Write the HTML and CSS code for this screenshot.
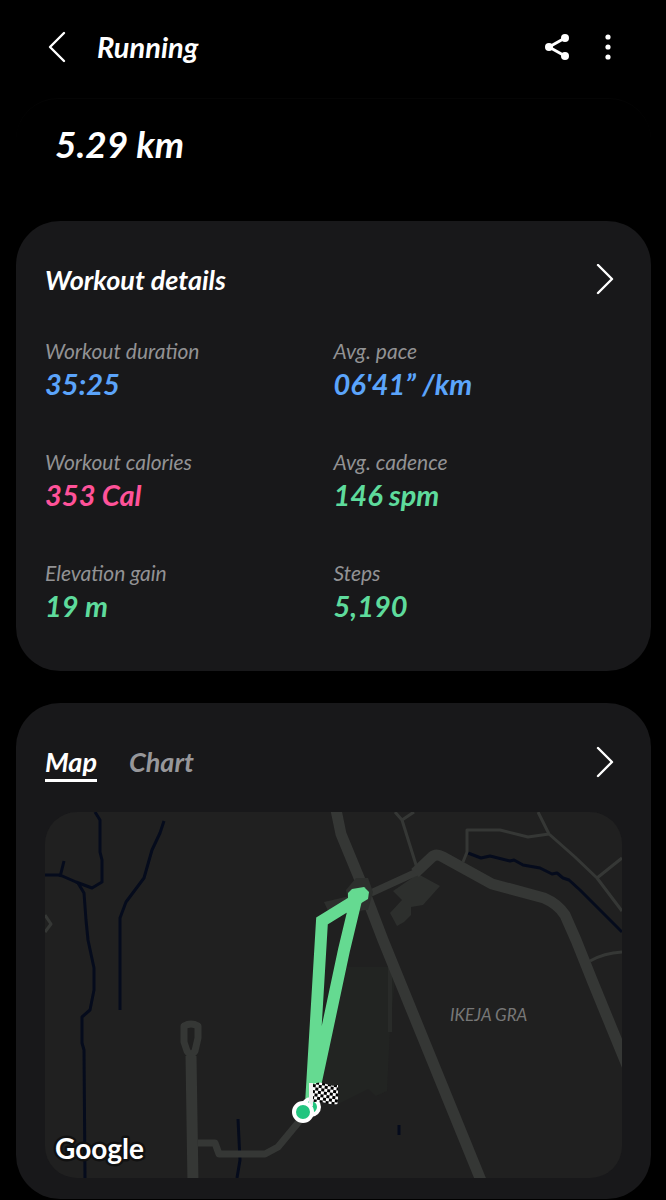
FILE: index.html
```html
<!DOCTYPE html>
<html lang="en">
<head>
<meta charset="utf-8">
<meta name="viewport" content="width=device-width, initial-scale=1">
<title>Running</title>
<link rel="stylesheet" href="styles.css">
</head>
<body>
<header class="topbar">
  <button class="icon-btn" type="button" aria-label="Back">
    <svg class="icon" viewBox="0 0 32 32"><path class="chevron" d="M22 2 8 16 22 30"/></svg>
  </button>
  <h1 class="topbar-title">Running</h1>
  <button class="icon-btn" type="button" aria-label="Share">
    <svg class="icon" viewBox="0 0 32 32"><path class="share-line" d="M24 7 8 16 24 25"/><circle cx="24" cy="7" r="4"/><circle cx="8" cy="16" r="4"/><circle cx="24" cy="25" r="4"/></svg>
  </button>
  <button class="icon-btn" type="button" aria-label="More options">
    <svg class="icon" viewBox="0 0 32 32"><circle cx="16" cy="6" r="2.6"/><circle cx="16" cy="16" r="2.6"/><circle cx="16" cy="26" r="2.6"/></svg>
  </button>
</header>
<main class="content">
  <section class="summary"><p class="distance">5.29 km</p></section>

  <section class="card">
    <div class="card-head">
      <h2 class="card-title">Workout details</h2>
      <button class="icon-btn" type="button" aria-label="Open workout details">
        <svg class="icon" viewBox="0 0 32 32"><path class="chevron" d="M8 1 22 15 8 29"/></svg>
      </button>
    </div>
    <dl class="stats">
      <div class="stat"><dt>Workout duration</dt><dd class="blue">35:25</dd></div>
      <div class="stat"><dt>Avg. pace</dt><dd class="blue">06'41” /km</dd></div>
      <div class="stat"><dt>Workout calories</dt><dd class="pink">353 Cal</dd></div>
      <div class="stat"><dt>Avg. cadence</dt><dd class="green">146 spm</dd></div>
      <div class="stat"><dt>Elevation gain</dt><dd class="green">19 m</dd></div>
      <div class="stat"><dt>Steps</dt><dd class="green">5,190</dd></div>
    </dl>
  </section>

  <section class="card">
    <div class="card-head">
      <div class="tabs" role="tablist">
        <button class="tab tab-active" type="button" role="tab" aria-selected="true">Map</button>
        <button class="tab" type="button" role="tab" aria-selected="false">Chart</button>
      </div>
      <button class="icon-btn" type="button" aria-label="Open map">
        <svg class="icon" viewBox="0 0 32 32"><path class="chevron" d="M8 2 22 16 8 30"/></svg>
      </button>
    </div>
    <svg class="map" viewBox="45 812 577 366" role="img" aria-label="Route map">
      <defs>
        <pattern id="checks" width="6" height="6" patternUnits="userSpaceOnUse" patternTransform="translate(313 1084) rotate(8)">
          <rect width="6" height="6" fill="#fff"/><rect width="3" height="3" fill="#000"/><rect x="3" y="3" width="3" height="3" fill="#000"/>
        </pattern>
      </defs>
      <path class="park" d="M345 967H388L395 980 390 1030 387 1091 376 1096 368 1089 340 1103 322 1090 330 1020Z"/>
      <path class="block" d="M388 967H392V1032H388Z"/>
      <path class="building" d="M393 891 418 874 440 886 423 905 411 907 411 915 404 922 397 926 390 913 402 900Z"/>
      <path class="building" d="M324 902 350 896 366 910 330 915Z"/>
      <g class="water">
        <path d="M95 812 100 820V852L102 860V882L92 888 76 882 60 875 45 875M64 861 60 877"/>
        <path d="M78 883 84 893 86 920 88 940 94 968V990L90 1010 82 1017V1043L84 1050 85 1178"/>
        <path d="M164 821 160 833 152 850 144 878 126 902 120 918V1010M238 1119 240 1160 237 1178M399 1125V1135"/>
        <path d="M468 853 481 858 490 856 510 861 514 860 523 865 540 868 552 874 557 873 563 878 569 880 580 890 622 932"/>
      </g>
      <g class="road road-thin">
        <path d="M395 812 402 820 417 868M402 820 414 812M463 862 467 852V830H500L528 837 549 834M538 812 549 834 575 857 597 878 622 911M597 878 622 858M590 961Q604 953 622 952M45 915 51 924 45 932"/>
      </g>
      <g class="road road-mid">
        <path d="M184 1026Q191 1022 198 1026L198 1038 195 1051Q191 1057 187 1051L184 1042ZM198 1143H215L219 1154H265L278 1147 302 1118M371 893 419 871"/>
      </g>
      <g class="road road-wide">
        <path d="M335 805 341 834 360 880 383 940 480 1178 484 1188M415 873 432 857Q436 853 443 857L492 884 544 898Q558 904 565 915L576 940 592 980 628 1068M191 1056 193 1184"/>
      </g>
      <path class="building" d="M346 890 356 878H368L373 892 368 910H350Z"/>
      <path class="route" d="M311 1104 322 921 356 900 344 950 327 1030 312 1100"/>
      <path class="route-end" d="M348 893 352 889 364 887 369 892 368 899 358 905 348 905Z"/>
      <circle class="pin" cx="311" cy="1107" r="8"/>
      <path d="M309 1083H313V1106H309Z" fill="#eee"/>
      <path d="M313 1084Q320 1081 326 1084T338 1085V1104Q332 1105 326 1103T313 1102Z" fill="url(#checks)"/>
      <circle class="pin" cx="303" cy="1112" r="9"/>
      <text class="map-place" x="450" y="1021">IKEJA GRA</text>
      <text class="map-brand" x="55" y="1159">Google</text>
    </svg>
  </section>
</main>
</body>
</html>
```
FILE: styles.css
```css
* {
  box-sizing: border-box;
}

body {
  margin: 0;
  background: #000;
  color: #fff;
  font-family: Lato, "Open Sans", sans-serif;
  font-style: italic;
}

h1, h2, p, dl, dd {
  margin: 0;
}

button {
  padding: 0;
  border: 0;
  background: none;
  color: inherit;
  font: inherit;
}

.topbar {
  display: flex;
  align-items: center;
  gap: 19px;
  height: 94px;
  padding: 0 42px;
}

.topbar-title {
  flex: 1;
  padding-left: 4px;
  font-size: 29px;
  line-height: 32px;
}

.icon-btn {
  display: flex;
}

.icon {
  width: 32px;
  height: 32px;
  fill: #fff;
}

.chevron,
.share-line {
  fill: none;
  stroke: #fff;
  stroke-width: 2.4;
  stroke-linecap: round;
  stroke-linejoin: round;
}

.share-line {
  stroke-width: 3;
}

.content {
  display: flex;
  flex-direction: column;
  gap: 32px;
  padding: 4px 15px 1px 16px;
}

.summary {
  padding: 23px 39px 24px;
  border-top: 1px solid #050505;
  border-radius: 42px;
}

.distance {
  font-size: 37px;
  font-weight: 700;
  line-height: 43px;
}

.card {
  padding: 29px 29px 21px;
  border-radius: 44px;
  background: #18181a;
}

.card-head {
  display: flex;
  align-items: center;
  justify-content: space-between;
  height: 60px;
}

.card-title {
  font-size: 27px;
  line-height: 32px;
}

.stats {
  display: grid;
  grid-template-columns: 1fr 1fr;
  gap: 45px 0;
  padding: 27px 0 25px;
}

.stat dt {
  color: #929294;
  font-size: 21px;
  line-height: 28px;
}

.stat dd {
  font-size: 29px;
  font-weight: 700;
  line-height: 38px;
}

.stat .blue {
  color: #5ba4fb;
}

.stat .pink {
  color: #ff5299;
}

.stat .green {
  color: #5edb9c;
}

.tabs {
  display: flex;
  gap: 32px;
}

.tab {
  padding-top: 3px;
  border-bottom: 3px solid transparent;
  color: #97979a;
  font-size: 27px;
  font-weight: 700;
  line-height: 34px;
}

.tab-active {
  border-color: #fff;
  color: #fff;
}

.map {
  display: block;
  width: 100%;
  margin-top: 20px;
  border-radius: 32px;
  background: #202020;
}

.park {
  fill: #222422;
}

.block {
  fill: #292b29;
}

.building {
  fill: #2d2f2d;
}

.water {
  fill: none;
  stroke: #050b1c;
  stroke-width: 3;
  stroke-linejoin: round;
}

.road {
  fill: none;
  stroke: #353735;
  stroke-linejoin: round;
}

.road-thin {
  stroke-width: 3;
}

.road-mid {
  stroke-width: 7;
}

.road-wide {
  stroke-width: 11;
}

.route {
  fill: none;
  stroke: #65da91;
  stroke-width: 12;
}

.route-end {
  fill: #65da91;
}

.pin {
  fill: #22c57f;
  stroke: #fff;
  stroke-width: 4;
}

.map-place {
  fill: #777;
  font-size: 17px;
}

.map-brand {
  fill: #fff;
  stroke: #111;
  stroke-width: 5;
  stroke-linejoin: round;
  paint-order: stroke;
  font-size: 28px;
  font-style: normal;
  font-weight: 700;
}
```
